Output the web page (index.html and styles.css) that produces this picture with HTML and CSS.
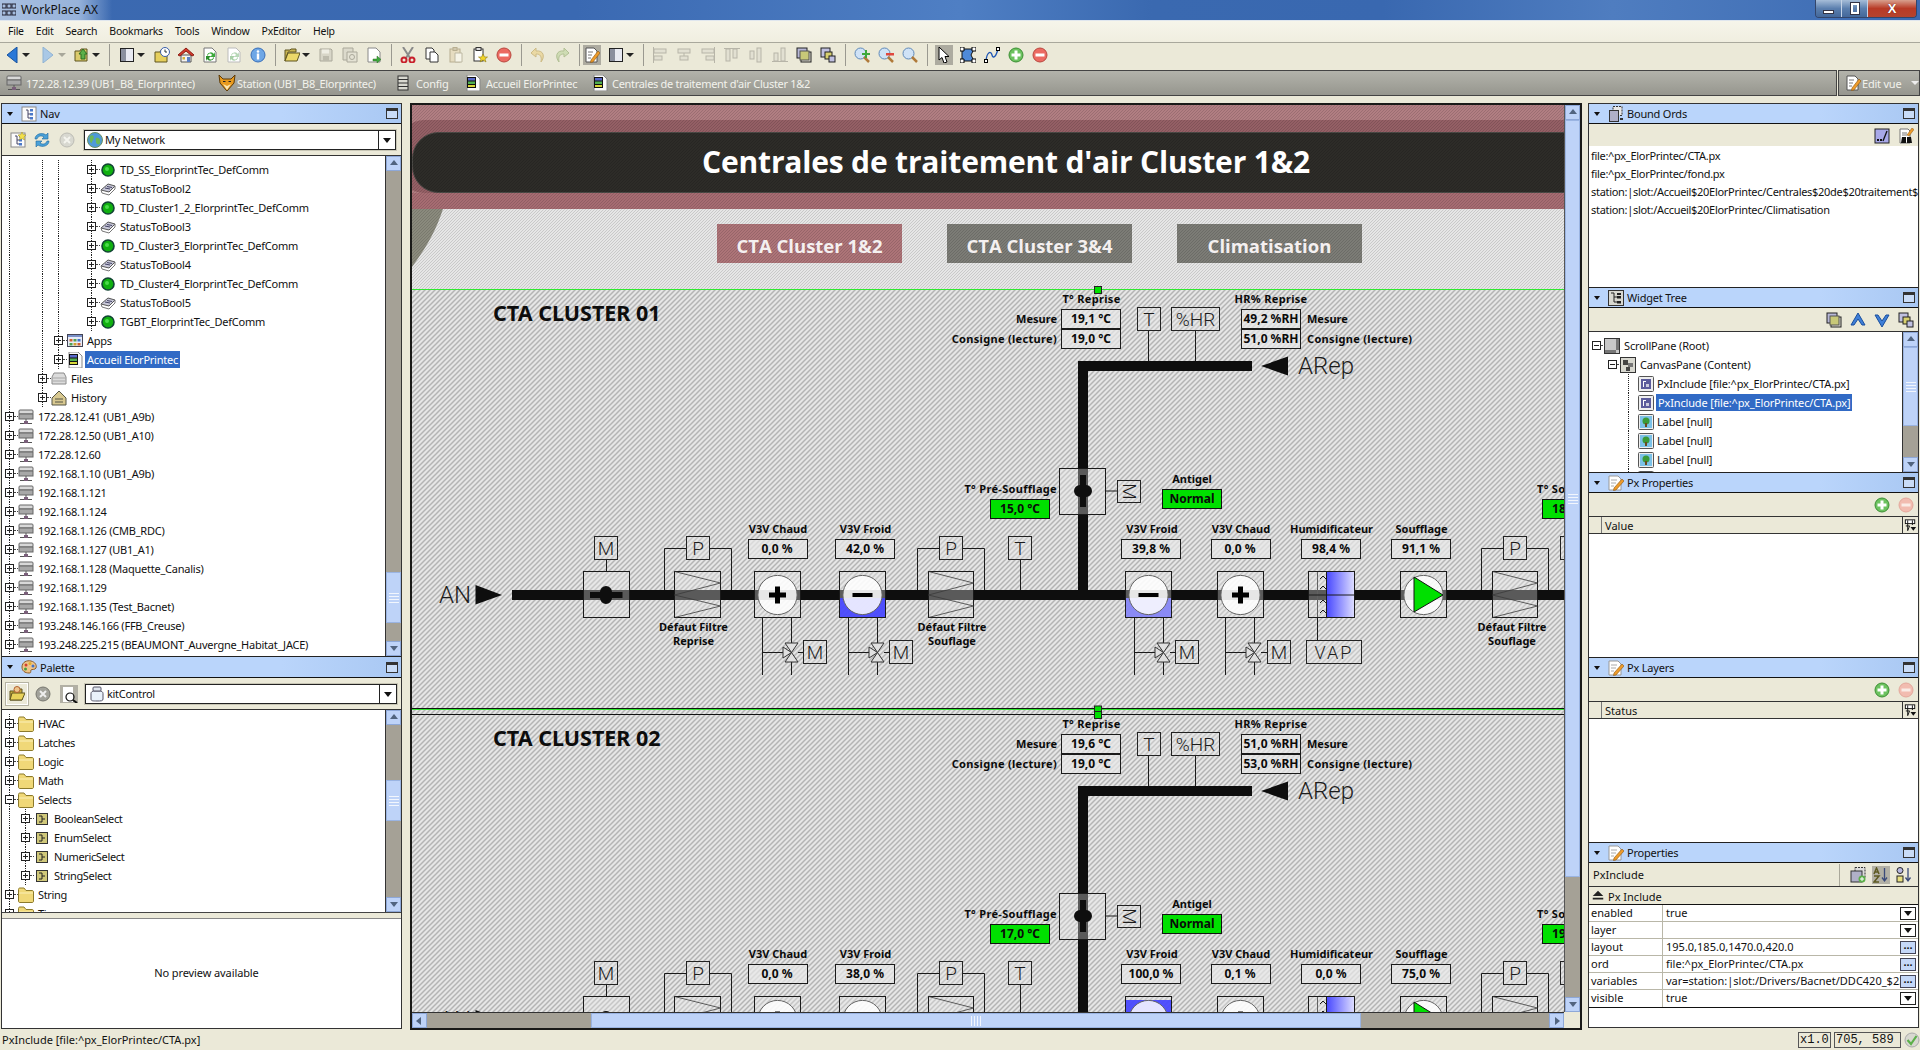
FILE: index.html
```html
<!DOCTYPE html>
<html lang="en">
<head>
<meta charset="utf-8">
<title>WorkPlace AX</title>
<link rel="stylesheet" href="styles.css">
</head>
<body>
<svg class="defs" width="0" height="0">
<defs>
<linearGradient id="gBlue" x1="0" y1="0" x2="1" y2="0"><stop offset="0" stop-color="#4a4aff"/><stop offset="1" stop-color="#dcdcff"/></linearGradient>
<pattern id="hl" width="5" height="5" patternUnits="userSpaceOnUse"><path d="M-1 1L1-1M0 5L5 0M4 6L6 4" stroke="#b4b4b4" stroke-width="1.5"/></pattern>
<pattern id="hu" width="3" height="3" patternUnits="userSpaceOnUse"><path d="M-1 1L1-1M0 3L3 0M2 4L4 2" stroke="#000" stroke-opacity=".14" stroke-width=".9"/></pattern>
<symbol id="i-back" viewBox="0 0 16 16"><path d="M13 0V16L3 8Z" fill="#2a78d8" stroke="#17539f"/></symbol>
<symbol id="i-fwd" viewBox="0 0 16 16"><path d="M3 0V16L13 8Z" fill="#a9c8e6" stroke="#8fb2d2"/></symbol>
<symbol id="i-folderup" viewBox="0 0 16 16"><path d="M1 4H6L7 2H13V14H1Z" fill="#dccb6c" stroke="#5e5520"/><path d="M7 12V7H5L9 2L13 7H11V12Z" fill="#5cb04a" stroke="#2c6d22"/></symbol>
<symbol id="i-panel" viewBox="0 0 16 16"><rect x="1.5" y="1.5" width="13" height="13" fill="#e8eaf2" stroke="#222"/><rect x="2" y="2" width="5" height="12" fill="#8a8f9e"/></symbol>
<symbol id="i-clockf" viewBox="0 0 16 16"><path d="M1 5H6L7 3H13V15H1Z" fill="#e6cf5c" stroke="#5e5520"/><circle cx="11" cy="5" r="4.5" fill="#fff" stroke="#3a5ea8"/><path d="M11 2.5V5H13" fill="none" stroke="#233"/></symbol>
<symbol id="i-home" viewBox="0 0 16 16"><path d="M3 8H13V15H3Z" fill="#f3f3f3" stroke="#555"/><path d="M0 8L8 1L16 8L14 9L8 4L2 9Z" fill="#d43a2c" stroke="#8b1f16"/><rect x="9" y="10" width="3" height="5" fill="#5a7fc4"/><rect x="4.500" y="10" width="2.500" height="2.500" fill="#d8b23a"/></symbol>
<symbol id="i-refp" viewBox="0 0 16 16"><path d="M2 1H10L14 5V15H2Z" fill="#fff" stroke="#777"/><path d="M5 8A4 4 0 0 1 12 7L13 5V10H8L10 8A2 2 0 0 0 6 9Z" fill="#3da93d"/><path d="M12 11A4 4 0 0 1 5 12L4 14V9H9L7 11A2 2 0 0 0 11 10Z" fill="#2c8f2c"/></symbol>
<symbol id="i-refpp" viewBox="0 0 16 16"><path d="M2 1H10L14 5V15H2Z" fill="#fff" stroke="#bbb"/><path d="M5 8A4 4 0 0 1 12 7L13 5V10H8L10 8A2 2 0 0 0 6 9Z" fill="#b8d8b8"/><path d="M12 11A4 4 0 0 1 5 12L4 14V9H9L7 11A2 2 0 0 0 11 10Z" fill="#a8cfa8"/></symbol>
<symbol id="i-info" viewBox="0 0 16 16"><circle cx="8" cy="8" r="7" fill="#6ea7e6" stroke="#3a6fb8"/><circle cx="8" cy="4.500" r="1.300" fill="#fff"/><rect x="6.800" y="6.500" width="2.400" height="6" fill="#fff"/></symbol>
<symbol id="i-open" viewBox="0 0 16 16"><path d="M1 3H6L7 2H12V5H4L1 14Z" fill="#c9b552" stroke="#5e5520"/><path d="M1 14L4 6H16L13 14Z" fill="#ecd86a" stroke="#5e5520"/></symbol>
<symbol id="i-save" viewBox="0 0 16 16"><path d="M2 2H13L14 3V14H2Z" fill="#d8d6c8" stroke="#aaa89a"/><rect x="4" y="2.500" width="7" height="4" fill="#efeee4"/><rect x="5" y="9" width="6" height="5" fill="#bdbbad"/></symbol>
<symbol id="i-saveall" viewBox="0 0 16 16"><path d="M1 1H11V13H1Z" fill="#dcdacc" stroke="#aaa89a"/><path d="M5 5H15V15H5Z" fill="#e4e2d4" stroke="#aaa89a"/><circle cx="10" cy="10" r="2.500" fill="none" stroke="#aaa89a"/></symbol>
<symbol id="i-pagea" viewBox="0 0 16 16"><path d="M2 1H10L14 5V15H2Z" fill="#fff" stroke="#888"/><path d="M7 12H11V9L15 12.500L11 16V14H7Z" fill="#3da93d" stroke="#2c6d22" stroke-width=".5"/></symbol>
<symbol id="i-cut" viewBox="0 0 16 16"><path d="M3 0L10 11M13 0L6 11" stroke="#8a8a8a" stroke-width="2"/><circle cx="4" cy="13" r="2.500" fill="none" stroke="#c8202c" stroke-width="2"/><circle cx="12" cy="13" r="2.500" fill="none" stroke="#c8202c" stroke-width="2"/></symbol>
<symbol id="i-copy" viewBox="0 0 16 16"><path d="M2 1H8L10 3V12H2Z" fill="#fff" stroke="#333"/><path d="M6 5H11L14 8V15H6Z" fill="#fff" stroke="#333"/></symbol>
<symbol id="i-paste" viewBox="0 0 16 16"><rect x="2" y="2" width="10" height="13" fill="#e6dcc0" stroke="#b8ae90"/><rect x="5" y="0.500" width="4" height="3" fill="#d0c8ae" stroke="#b8ae90"/><path d="M7 6H14V15H7Z" fill="#f6f4e8" stroke="#bdb8a2"/></symbol>
<symbol id="i-pastes" viewBox="0 0 16 16"><rect x="2" y="2" width="9" height="12" fill="#fff" stroke="#333"/><rect x="4" y="0.500" width="5" height="3" fill="#ddd" stroke="#333"/><path d="M11 7L12.500 10H15.500L13 12L14 15L11 13L8 15L9 12L6.500 10H9.500Z" fill="#f2d52a" stroke="#8d7a10" stroke-width=".6"/></symbol>
<symbol id="i-stop" viewBox="0 0 16 16"><circle cx="8" cy="8" r="7" fill="#ec6a62" stroke="#b9483f"/><rect x="3.500" y="6.500" width="9" height="3" fill="#fff"/></symbol>
<symbol id="i-add" viewBox="0 0 16 16"><circle cx="8" cy="8" r="7" fill="#6cc25f" stroke="#3c8f34"/><path d="M3.500 6.500H6.500V3.500H9.500V6.500H12.500V9.500H9.500V12.500H6.500V9.500H3.500Z" fill="#fff"/></symbol>
<symbol id="i-stopp" viewBox="0 0 16 16"><circle cx="8" cy="8" r="7" fill="#f2bcb0" stroke="#e4a89c"/><rect x="3.500" y="6.500" width="9" height="3" fill="#faece6"/></symbol>
<symbol id="i-undo" viewBox="0 0 16 16"><path d="M6 1L1 6L6 10V7C10 7 12 9 11 15C15 10 14 3 6 4Z" fill="#ead9a4" stroke="#cdbb86"/></symbol>
<symbol id="i-redo" viewBox="0 0 16 16"><path d="M10 1L15 6L10 10V7C6 7 4 9 5 15C1 10 2 3 10 4Z" fill="#cfdcb4" stroke="#b2c094"/></symbol>
<symbol id="i-edit" viewBox="0 0 16 16"><path d="M2 1H10L13 4V15H2Z" fill="#fff" stroke="#555"/><path d="M4 5H9M4 8H8M4 11H7" stroke="#777"/><path d="M7 13L14 4L16 6L9 15L6.500 15.500Z" fill="#ee9b2a" stroke="#8a5610" stroke-width=".6"/></symbol>
<symbol id="i-al1" viewBox="0 0 16 16"><path d="M1.500 0V16" stroke="#b7b5a8"/><rect x="2" y="2" width="12" height="4" fill="#e2e0d2" stroke="#b7b5a8"/><rect x="2" y="9" width="8" height="4" fill="#e2e0d2" stroke="#b7b5a8"/></symbol>
<symbol id="i-al2" viewBox="0 0 16 16"><rect x="2" y="2" width="12" height="4" fill="#e2e0d2" stroke="#b7b5a8"/><rect x="4" y="9" width="8" height="4" fill="#e2e0d2" stroke="#b7b5a8"/><path d="M8 6V9" stroke="#b7b5a8"/></symbol>
<symbol id="i-al3" viewBox="0 0 16 16"><path d="M14.500 0V16" stroke="#b7b5a8"/><rect x="2" y="2" width="12" height="4" fill="#e2e0d2" stroke="#b7b5a8"/><rect x="6" y="9" width="8" height="4" fill="#e2e0d2" stroke="#b7b5a8"/></symbol>
<symbol id="i-al4" viewBox="0 0 16 16"><path d="M0 1.500H16" stroke="#b7b5a8"/><rect x="2" y="2" width="4" height="12" fill="#e2e0d2" stroke="#b7b5a8"/><rect x="9" y="2" width="4" height="9" fill="#e2e0d2" stroke="#b7b5a8"/></symbol>
<symbol id="i-al5" viewBox="0 0 16 16"><rect x="2" y="4" width="4" height="8" fill="#e2e0d2" stroke="#b7b5a8"/><rect x="9" y="1" width="4" height="14" fill="#e2e0d2" stroke="#b7b5a8"/></symbol>
<symbol id="i-al6" viewBox="0 0 16 16"><path d="M0 14.500H16" stroke="#b7b5a8"/><rect x="2" y="6" width="4" height="8" fill="#e2e0d2" stroke="#b7b5a8"/><rect x="9" y="1" width="4" height="13" fill="#e2e0d2" stroke="#b7b5a8"/></symbol>
<symbol id="i-lay1" viewBox="0 0 16 16"><rect x="5" y="5" width="10" height="10" fill="#dedcd0" stroke="#222"/><rect x="1" y="1" width="10" height="10" fill="#b8b8d8" stroke="#222"/><rect x="4" y="4" width="9" height="9" fill="#c8c878" stroke="#555"/></symbol>
<symbol id="i-lay2" viewBox="0 0 16 16"><rect x="1" y="1" width="9" height="9" fill="#c0c0e0" stroke="#222"/><rect x="5" y="5" width="7" height="7" fill="#d8d070" stroke="#222"/><rect x="9" y="9" width="6" height="6" fill="#c0c0e0" stroke="#222"/></symbol>
<symbol id="i-zp" viewBox="0 0 16 16"><circle cx="6.500" cy="6.500" r="5.500" fill="#cfe2f6" stroke="#5f89b8"/><path d="M10 10L15 15" stroke="#b07a3a" stroke-width="2.500"/><path d="M8 6H11V3H13V6H16V8H13V11H11V8H8Z" fill="#3da93d"/></symbol>
<symbol id="i-zm" viewBox="0 0 16 16"><circle cx="6.500" cy="6.500" r="5.500" fill="#cfe2f6" stroke="#5f89b8"/><path d="M10 10L15 15" stroke="#b07a3a" stroke-width="2.500"/><rect x="8" y="6" width="8" height="2.500" fill="#e0483e"/></symbol>
<symbol id="i-z" viewBox="0 0 16 16"><circle cx="6.500" cy="6.500" r="5.500" fill="#cfe2f6" stroke="#5f89b8"/><path d="M10 10L15 15" stroke="#b07a3a" stroke-width="2.500"/></symbol>
<symbol id="i-cur" viewBox="0 0 16 16"><path d="M3 0V13L6 10.500L8 16L11 15L9 9.500H13Z" fill="#fff" stroke="#000"/></symbol>
<symbol id="i-shape" viewBox="0 0 16 16"><path d="M2 2H14L11 8L14 14H2Z" fill="#4f8ad8" stroke="#111"/><path d="M0 0H4V4H0ZM12 0H16V4H12ZM0 12H4V16H0ZM12 12H16V16H12Z" fill="#fff" stroke="#000"/></symbol>
<symbol id="i-curve" viewBox="0 0 16 16"><path d="M2 14C3 4 7 4 8 8S12 10 14 2" fill="none" stroke="#1e56b4" stroke-width="1.300"/><rect x="0.500" y="12.500" width="3" height="3" fill="#fff" stroke="#000"/><rect x="12.500" y="0.500" width="3" height="3" fill="#fff" stroke="#000"/></symbol>
<symbol id="i-host" viewBox="0 0 16 16"><rect x="1" y="1" width="14" height="4" rx="1" fill="#d8d8d8" stroke="#666"/><rect x="1" y="5" width="14" height="5" fill="#a8a8a8" stroke="#666"/><path d="M8 10V14M2 14.500H14" stroke="#555"/><rect x="6" y="12" width="4" height="3" fill="#7a5f7a"/></symbol>
<symbol id="i-fox" viewBox="0 0 18 16"><path d="M1 0L5 4H13L17 0L16 8L9 16L2 8Z" fill="#e89a1e" stroke="#5c3a08"/><path d="M5 9L9 15L13 9L9 11Z" fill="#fbe7b4"/><path d="M5 6.500H7.500M10.500 6.500H13" stroke="#222" stroke-width="1.200"/></symbol>
<symbol id="i-conf" viewBox="0 0 16 16"><rect x="3" y="1" width="10" height="14" fill="#d8d8d0" stroke="#333"/><path d="M3 4.500H13M3 8H13M3 11.500H13" stroke="#333"/></symbol>
<symbol id="i-stack" viewBox="0 0 16 16"><path d="M2 0H11L15 4V16H2Z" fill="#fafafa" stroke="#888"/><rect x="2" y="2" width="9" height="11" fill="#111"/><rect x="3" y="3" width="7" height="2.500" fill="#5868c8"/><rect x="3" y="6.500" width="7" height="2.500" fill="#50b050"/><rect x="3" y="10" width="7" height="2" fill="#d8d838"/></symbol>
<symbol id="i-navp" viewBox="0 0 16 16"><rect x="1" y="1" width="14" height="14" fill="#fbfbfb" stroke="#8a8a8a"/><path d="M5 4H7V12H10M7 8H10" fill="none" stroke="#446"/><rect x="9" y="3" width="3" height="2.500" fill="#4a78c8"/><rect x="9" y="7" width="3" height="2.500" fill="#4a78c8"/><rect x="9" y="11" width="3" height="2.500" fill="#4a78c8"/></symbol>
<symbol id="i-navn" viewBox="0 0 16 16"><use href="#i-navp"/><path d="M12 0L13.200 2.500L16 3L14 5L14.500 8L12 6.500L9.500 8L10 5L8 3L10.800 2.500Z" fill="#f2e04a" stroke="#9a8a20" stroke-width=".5"/></symbol>
<symbol id="i-sync" viewBox="0 0 16 16"><path d="M1 7C1 2 8 0 12 3L14 1V7H8L10 5C7 3 4 4 3 7Z" fill="#4aa0d8" stroke="#1e6a9e" stroke-width=".6"/><path d="M15 9C15 14 8 16 4 13L2 15V9H8L6 11C9 13 12 12 13 9Z" fill="#4aa0d8" stroke="#1e6a9e" stroke-width=".6"/></symbol>
<symbol id="i-xg" viewBox="0 0 16 16"><circle cx="8" cy="8" r="7" fill="#d8d8d0" stroke="#bcbcb4"/><path d="M5 5L11 11M11 5L5 11" stroke="#f4f4ee" stroke-width="2"/></symbol>
<symbol id="i-xd" viewBox="0 0 16 16"><circle cx="8" cy="8" r="7" fill="#a2a29a" stroke="#77776f"/><path d="M5 5L11 11M11 5L5 11" stroke="#eee" stroke-width="2"/></symbol>
<symbol id="i-globe" viewBox="0 0 16 16"><circle cx="8" cy="8" r="7.500" fill="#4e9ad8" stroke="#6b8f60"/><path d="M3 4C6 2 8 5 6 8S5 12 4 11 2 6 3 4ZM9 6C12 5 14 8 13 11S9 12 9 10 8 7 9 6Z" fill="#6cb85a"/></symbol>
<symbol id="i-pal" viewBox="0 0 16 16"><path d="M1 8C1 3 6 1 10 2S16 6 15 9C14 11 11 10 10 11S11 14 8 14C4 14 1 12 1 8Z" fill="#eec48a" stroke="#8c5c28"/><circle cx="5" cy="6" r="1.500" fill="#d04030"/><circle cx="9" cy="4.500" r="1.500" fill="#e0b030"/><circle cx="4.500" cy="10" r="1.500" fill="#4aa040"/><circle cx="12" cy="7" r="1.500" fill="#4070c8"/></symbol>
<symbol id="i-palo" viewBox="0 0 16 16"><path d="M1 5H6L7 3H13V14H1Z" fill="#c8ac3c" stroke="#5e5520"/><path d="M1 14L3 7H16L13 14Z" fill="#e8d25a" stroke="#5e5520"/><circle cx="8" cy="3.500" r="3" fill="#eec48a" stroke="#b06030"/></symbol>
<symbol id="i-find" viewBox="0 0 16 16"><path d="M1 0H11V15H1Z" fill="#fff"/><circle cx="8" cy="10" r="4" fill="none" stroke="#111" stroke-width="1.200"/><path d="M11 13L15 16" stroke="#111" stroke-width="2"/></symbol>
<symbol id="i-jar" viewBox="0 0 16 16"><path d="M4 5C2 6 2 7 2 8V13C2 15 4 15 8 15S14 15 14 13V8C14 7 14 6 12 5Z" fill="#eaf2fb" stroke="#556"/><rect x="4" y="1" width="8" height="4" rx="1" fill="#dfe5ee" stroke="#556"/></symbol>
<symbol id="i-folder" viewBox="0 0 16 16"><path d="M.5 2.500C.5 1.500 1 1 2 1H6L8 3.500H14C15 3.500 15.500 4 15.500 5V14C15.500 15 15 15.500 14 15.500H2C1 15.500 .5 15 .5 14Z" fill="#f0d878" stroke="#8c7a2c"/><path d="M1 6H15" stroke="#fbf0b8"/></symbol>
<symbol id="i-sel" viewBox="0 0 16 16"><rect x="2.500" y="2.500" width="11" height="11" fill="#d0c87a" stroke="#333"/><path d="M5 5H8V11H5M8 8H11" fill="none" stroke="#222"/></symbol>
<symbol id="i-green" viewBox="0 0 16 16"><circle cx="8" cy="8" r="6" fill="#10b010" stroke="#143" stroke-width="1.600"/><circle cx="7" cy="7" r="2" fill="#4cdc4c"/></symbol>
<symbol id="i-tag" viewBox="0 0 16 16"><path d="M1 9L8 3L15 5L9 11Z" fill="#c8c8d8" stroke="#555"/><path d="M5 7L10 8M7 5.500L12 6.500" stroke="#446"/><path d="M1 9L2 12L9 14L15 8L15 5" fill="none" stroke="#777"/></symbol>
<symbol id="i-apps" viewBox="0 0 16 16"><rect x="0.500" y="1.500" width="15" height="12" fill="#e8ecf8" stroke="#445"/><rect x="1" y="2" width="14" height="2" fill="#7a90c8"/><rect x="2.500" y="6" width="3" height="2.500" fill="#d06030"/><rect x="6.500" y="6" width="3" height="2.500" fill="#50a050"/><rect x="10.500" y="6" width="3" height="2.500" fill="#4070c8"/><rect x="2.500" y="10" width="3" height="2.500" fill="#50a050"/><rect x="6.500" y="10" width="3" height="2.500" fill="#d0a030"/><rect x="10.500" y="10" width="3" height="2.500" fill="#d06030"/></symbol>
<symbol id="i-files" viewBox="0 0 16 16"><path d="M1 13V6L3 2H13L15 6V13Z" fill="#dcdcdc" stroke="#8a8a8a"/><path d="M1 7H15M2 10H14" stroke="#a8a8a8"/></symbol>
<symbol id="i-hist" viewBox="0 0 16 16"><path d="M1 8L8 1L15 8V15H1Z" fill="#d8c890" stroke="#554"/><path d="M4 9H12M4 12H12" stroke="#554"/></symbol>
<symbol id="i-bound" viewBox="0 0 16 16"><rect x="5" y="0.500" width="9" height="9" fill="#e8e8e8" stroke="#333" stroke-dasharray="2 1"/><rect x="1.500" y="4.500" width="9" height="11" fill="#b0b0c8" stroke="#333"/><rect x="12" y="12" width="3" height="2" fill="#333"/></symbol>
<symbol id="i-dots" viewBox="0 0 16 16"><rect x="1" y="1" width="14" height="14" fill="#a8a8e8" stroke="#222"/><rect x="3" y="11" width="2" height="2" fill="#111"/><rect x="6" y="11" width="2" height="2" fill="#111"/><path d="M9 13L13 3" stroke="#111" stroke-width="1.300"/></symbol>
<symbol id="i-edf" viewBox="0 0 16 16"><path d="M2 1H10L12 3V15H2Z" fill="#fff" stroke="#777"/><path d="M4 5H9M4 7H9" stroke="#777"/><path d="M9 7L14 0L16 1.500L11 8Z" fill="#ee9b2a" stroke="#8a5610" stroke-width=".5"/><path d="M4 9H8V15H3ZM9 9H13L14 15H9Z" fill="#111"/></symbol>
<symbol id="i-tree" viewBox="0 0 16 16"><rect x="0.500" y="0.500" width="15" height="15" fill="#d8d8d0" stroke="#333"/><path d="M3 3H6V12H9M6 7H9" fill="none" stroke="#222"/><rect x="9" y="3" width="4" height="2" fill="#222"/><rect x="9" y="6" width="4" height="2.500" fill="#222"/><rect x="9" y="11" width="4" height="2.500" fill="#222"/></symbol>
<symbol id="i-up" viewBox="0 0 16 16"><path d="M8 1L15 13H12L8 7L4 13H1Z" fill="#3f7fd8" stroke="#1a4f9c"/></symbol>
<symbol id="i-dn" viewBox="0 0 16 16"><path d="M8 15L15 3H12L8 9L4 3H1Z" fill="#3f7fd8" stroke="#1a4f9c"/></symbol>
<symbol id="i-props" viewBox="0 0 16 16"><path d="M1 1H10L13 4V15H1Z" fill="#fff" stroke="#999"/><path d="M3 5H9M3 8H8M3 11H6" stroke="#aaa"/><path d="M6 13L14 4L16 6L8 15L5.500 15.500Z" fill="#ee9b2a" stroke="#8a5610" stroke-width=".6"/></symbol>
<symbol id="i-px" viewBox="0 0 16 16"><rect x="0.500" y="0.500" width="15" height="15" rx="1" fill="#eee" stroke="#555"/><rect x="3" y="3" width="10" height="10" fill="#5c5c9c"/><rect x="5" y="5" width="3" height="1" fill="#fff"/><rect x="5" y="5" width="1" height="6" fill="#fff"/><rect x="8" y="8" width="3" height="3" fill="#ccd"/></symbol>
<symbol id="i-lab" viewBox="0 0 16 16"><rect x="0.500" y="0.500" width="15" height="15" rx="1" fill="#eee" stroke="#555"/><rect x="2" y="2" width="12" height="12" fill="#7cc2e8"/><circle cx="8" cy="7" r="3.500" fill="#3a9a3a"/><rect x="7" y="9" width="2" height="4" fill="#6a4a20"/></symbol>
<symbol id="i-scr" viewBox="0 0 16 16"><rect x="0.500" y="0.500" width="15" height="15" fill="#c8c8c8" stroke="#333"/><rect x="12" y="1" width="3" height="11" fill="#777"/><rect x="1" y="12" width="11" height="3" fill="#777"/></symbol>
<symbol id="i-can" viewBox="0 0 16 16"><rect x="0.500" y="0.500" width="15" height="15" fill="#d8d8d0" stroke="#333"/><rect x="3" y="3" width="5" height="5" fill="#444"/><rect x="8" y="6" width="5" height="4" fill="#777"/><rect x="6" y="10" width="4" height="4" fill="#444"/></symbol>
<symbol id="i-addc" viewBox="0 0 16 16"><rect x="5" y="0.500" width="10" height="10" fill="#ddd" stroke="#333" stroke-dasharray="2 1"/><rect x="1" y="4" width="11" height="11" fill="#b0b0c8" stroke="#333"/><circle cx="12" cy="12" r="3.500" fill="#5cb04a"/><path d="M10 12H14M12 10V14" stroke="#fff"/></symbol>
<symbol id="i-az" viewBox="0 0 16 16"><path d="M11.500 1V13M9 10.500L11.500 14L14 10.500" fill="none" stroke="#3a4a7a" stroke-width="1.300"/><path d="M1 7L3.500 1L6 7M2 5H5M1 9H6L1 15H6" fill="none" stroke="#5e5a22" stroke-width="1.500"/></symbol>
<symbol id="i-sort" viewBox="0 0 16 16"><circle cx="4" cy="3.500" r="3" fill="#b8b8e0" stroke="#222"/><rect x="1" y="9" width="6" height="6" fill="#e8e080" stroke="#222"/><path d="M12 1V13M9.500 10.500L12 14L14.500 10.500" fill="none" stroke="#3a4a7a" stroke-width="1.300"/></symbol>
<symbol id="i-tabo" viewBox="0 0 16 16"><rect x="2.500" y="2.500" width="10" height="4" fill="#fff" stroke="#111"/><path d="M5 3V14M10 3V8M3 9H7L5 14" fill="none" stroke="#111"/><path d="M8 10H14L11 14Z" fill="#111"/></symbol>
<symbol id="i-chk" viewBox="0 0 16 16"><circle cx="8" cy="8" r="7" fill="#d8d8d0" stroke="#aaa"/><path d="M3.500 8L7 12L12.500 4" fill="none" stroke="#5cb04a" stroke-width="2.200"/></symbol>
<symbol id="i-col" viewBox="0 0 16 16"><path d="M8 2L14 8H2ZM2 10H14V12H2Z" fill="#222"/></symbol>
<symbol id="i-wa" viewBox="0 0 14 14"><rect x="0" y="1" width="4" height="4" fill="none" stroke="#223"/><rect x="5" y="1" width="4" height="4" fill="none" stroke="#223"/><rect x="10" y="1" width="4" height="4" fill="none" stroke="#223"/><rect x="0" y="8" width="4" height="4" fill="none" stroke="#223"/><rect x="5" y="8" width="4" height="4" fill="none" stroke="#223"/><rect x="10" y="8" width="4" height="4" fill="none" stroke="#223"/></symbol>
</defs>
</svg>

<header class="titlebar">
  <div class="glow"><svg class="ic wa"><use href="#i-wa"/></svg><span>WorkPlace AX</span></div>
  <div class="winctl"><span class="wc wc-min"><i></i></span><span class="wc wc-max"><i></i></span><span class="wc wc-close">X</span></div>
</header>

<nav class="menubar"><span>File</span><span>Edit</span><span>Search</span><span>Bookmarks</span><span>Tools</span><span>Window</span><span>PxEditor</span><span>Help</span></nav>

<div class="toolbar">
  <a class="b"><svg class="ic"><use href="#i-back"/></svg></a><i class="d"></i><i class="s2"></i>
  <a class="b"><svg class="ic"><use href="#i-fwd"/></svg></a><i class="d pale"></i>
  <a class="b"><svg class="ic"><use href="#i-folderup"/></svg></a><i class="d"></i><i class="sep"></i><i class="s1"></i>
  <a class="b"><svg class="ic"><use href="#i-panel"/></svg></a><i class="d"></i><i class="s1"></i>
  <a class="b"><svg class="ic"><use href="#i-clockf"/></svg></a>
  <a class="b"><svg class="ic"><use href="#i-home"/></svg></a>
  <a class="b"><svg class="ic"><use href="#i-refp"/></svg></a>
  <a class="b"><svg class="ic"><use href="#i-refpp"/></svg></a>
  <a class="b"><svg class="ic"><use href="#i-info"/></svg></a><i class="sep"></i>
  <a class="b"><svg class="ic"><use href="#i-open"/></svg></a><i class="d"></i>
  <a class="b"><svg class="ic"><use href="#i-save"/></svg></a>
  <a class="b"><svg class="ic"><use href="#i-saveall"/></svg></a>
  <a class="b"><svg class="ic"><use href="#i-pagea"/></svg></a><i class="sep"></i>
  <a class="b"><svg class="ic"><use href="#i-cut"/></svg></a>
  <a class="b"><svg class="ic"><use href="#i-copy"/></svg></a>
  <a class="b"><svg class="ic"><use href="#i-paste"/></svg></a>
  <a class="b"><svg class="ic"><use href="#i-pastes"/></svg></a>
  <a class="b"><svg class="ic"><use href="#i-stop"/></svg></a><i class="sep"></i>
  <a class="b"><svg class="ic"><use href="#i-undo"/></svg></a>
  <a class="b"><svg class="ic"><use href="#i-redo"/></svg></a><i class="sep n"></i>
  <a class="b on"><svg class="ic"><use href="#i-edit"/></svg></a>
  <a class="b"><svg class="ic"><use href="#i-panel"/></svg></a><i class="d"></i><i class="sep"></i>
  <a class="b"><svg class="ic"><use href="#i-al1"/></svg></a>
  <a class="b"><svg class="ic"><use href="#i-al2"/></svg></a>
  <a class="b"><svg class="ic"><use href="#i-al3"/></svg></a>
  <a class="b"><svg class="ic"><use href="#i-al4"/></svg></a>
  <a class="b"><svg class="ic"><use href="#i-al5"/></svg></a>
  <a class="b"><svg class="ic"><use href="#i-al6"/></svg></a>
  <a class="b"><svg class="ic"><use href="#i-lay1"/></svg></a>
  <a class="b"><svg class="ic"><use href="#i-lay2"/></svg></a><i class="sep"></i>
  <a class="b"><svg class="ic"><use href="#i-zp"/></svg></a>
  <a class="b"><svg class="ic"><use href="#i-zm"/></svg></a>
  <a class="b"><svg class="ic"><use href="#i-z"/></svg></a><i class="sep"></i>
  <a class="b on"><svg class="ic"><use href="#i-cur"/></svg></a>
  <a class="b"><svg class="ic"><use href="#i-shape"/></svg></a>
  <a class="b"><svg class="ic"><use href="#i-curve"/></svg></a>
  <a class="b"><svg class="ic"><use href="#i-add"/></svg></a>
  <a class="b"><svg class="ic"><use href="#i-stop"/></svg></a>
</div>

<div class="tabbar">
  <div class="tabs">
    <span class="tab t1"><svg class="ic"><use href="#i-host"/></svg>172.28.12.39 (UB1_B8_Elorprintec)</span>
    <span class="tab t2"><svg class="ic fox"><use href="#i-fox"/></svg>Station (UB1_B8_Elorprintec)</span>
    <span class="tab t3"><svg class="ic"><use href="#i-conf"/></svg>Config</span>
    <span class="tab t4"><svg class="ic"><use href="#i-stack"/></svg>Accueil ElorPrintec</span>
    <span class="tab t5"><svg class="ic"><use href="#i-stack"/></svg>Centrales de traitement d'air Cluster 1&amp;2</span>
  </div>
  <div class="editvue"><svg class="ic"><use href="#i-edit"/></svg>Edit vue<i class="d lite"></i></div>
</div>

<main class="main">
  <section class="col left">
    <div class="pane nav-pane">
      <div class="phead"><i class="tri"></i><svg class="ic"><use href="#i-navp"/></svg><span>Nav</span><i class="rest"></i></div>
      <div class="ptool t32">
        <svg class="ic m1"><use href="#i-navn"/></svg><svg class="ic m2"><use href="#i-sync"/></svg><svg class="ic m3"><use href="#i-xg"/></svg>
        <div class="combo"><svg class="ic"><use href="#i-globe"/></svg><span>My Network</span><i class="cbtn"></i></div>
      </div>
      <div class="treewrap">
        <div class="tree navtree">
          <div class="row d3 l3"><b class="plus"></b><svg class="ic"><use href="#i-green"/></svg><span>TD_SS_ElorprintTec_DefComm</span></div>
          <div class="row d3 l3"><b class="plus"></b><svg class="ic"><use href="#i-tag"/></svg><span>StatusToBool2</span></div>
          <div class="row d3 l3"><b class="plus"></b><svg class="ic"><use href="#i-green"/></svg><span>TD_Cluster1_2_ElorprintTec_DefComm</span></div>
          <div class="row d3 l3"><b class="plus"></b><svg class="ic"><use href="#i-tag"/></svg><span>StatusToBool3</span></div>
          <div class="row d3 l3"><b class="plus"></b><svg class="ic"><use href="#i-green"/></svg><span>TD_Cluster3_ElorprintTec_DefComm</span></div>
          <div class="row d3 l3"><b class="plus"></b><svg class="ic"><use href="#i-tag"/></svg><span>StatusToBool4</span></div>
          <div class="row d3 l3"><b class="plus"></b><svg class="ic"><use href="#i-green"/></svg><span>TD_Cluster4_ElorprintTec_DefComm</span></div>
          <div class="row d3 l3"><b class="plus"></b><svg class="ic"><use href="#i-tag"/></svg><span>StatusToBool5</span></div>
          <div class="row d3 l3"><b class="plus"></b><svg class="ic"><use href="#i-green"/></svg><span>TGBT_ElorprintTec_DefComm</span></div>
          <div class="row d2 l2"><b class="plus"></b><svg class="ic"><use href="#i-apps"/></svg><span>Apps</span></div>
          <div class="row d2 l2"><b class="plus"></b><svg class="ic"><use href="#i-stack"/></svg><span class="sel">Accueil ElorPrintec</span></div>
          <div class="row d1 l1"><b class="plus"></b><svg class="ic"><use href="#i-files"/></svg><span>Files</span></div>
          <div class="row d1 l1"><b class="plus"></b><svg class="ic"><use href="#i-hist"/></svg><span>History</span></div>
          <div class="row d0 l0"><b class="plus"></b><svg class="ic"><use href="#i-host"/></svg><span>172.28.12.41 (UB1_A9b)</span></div>
          <div class="row d0 l0"><b class="plus"></b><svg class="ic"><use href="#i-host"/></svg><span>172.28.12.50 (UB1_A10)</span></div>
          <div class="row d0 l0"><b class="plus"></b><svg class="ic"><use href="#i-host"/></svg><span>172.28.12.60</span></div>
          <div class="row d0 l0"><b class="plus"></b><svg class="ic"><use href="#i-host"/></svg><span>192.168.1.10 (UB1_A9b)</span></div>
          <div class="row d0 l0"><b class="plus"></b><svg class="ic"><use href="#i-host"/></svg><span>192.168.1.121</span></div>
          <div class="row d0 l0"><b class="plus"></b><svg class="ic"><use href="#i-host"/></svg><span>192.168.1.124</span></div>
          <div class="row d0 l0"><b class="plus"></b><svg class="ic"><use href="#i-host"/></svg><span>192.168.1.126 (CMB_RDC)</span></div>
          <div class="row d0 l0"><b class="plus"></b><svg class="ic"><use href="#i-host"/></svg><span>192.168.1.127 (UB1_A1)</span></div>
          <div class="row d0 l0"><b class="plus"></b><svg class="ic"><use href="#i-host"/></svg><span>192.168.1.128 (Maquette_Canalis)</span></div>
          <div class="row d0 l0"><b class="plus"></b><svg class="ic"><use href="#i-host"/></svg><span>192.168.1.129</span></div>
          <div class="row d0 l0"><b class="plus"></b><svg class="ic"><use href="#i-host"/></svg><span>192.168.1.135 (Test_Bacnet)</span></div>
          <div class="row d0 l0"><b class="plus"></b><svg class="ic"><use href="#i-host"/></svg><span>193.248.146.166 (FFB_Creuse)</span></div>
          <div class="row d0 l0"><b class="plus"></b><svg class="ic"><use href="#i-host"/></svg><span>193.248.225.215 (BEAUMONT_Auvergne_Habitat_JACE)</span></div>
        </div>
        <div class="vs"><i class="up"></i><i class="tr nav-a"></i><i class="thumb nav-t"></i><i class="tr grow"></i><i class="dn"></i></div>
      </div>
    </div>
    <div class="pane pal-pane">
      <div class="phead"><i class="tri"></i><svg class="ic"><use href="#i-pal"/></svg><span>Palette</span><i class="rest"></i></div>
      <div class="ptool t32">
        <span class="tbtn"><svg class="ic"><use href="#i-palo"/></svg></span><svg class="ic m3b"><use href="#i-xd"/></svg><span class="fbtn"><svg class="ic"><use href="#i-find"/></svg></span>
        <div class="combo c2"><svg class="ic"><use href="#i-jar"/></svg><span>kitControl</span><i class="cbtn"></i></div>
      </div>
      <div class="treewrap">
        <div class="tree paltree">
          <div class="row d0 l0"><b class="plus"></b><svg class="ic"><use href="#i-folder"/></svg><span>HVAC</span></div>
          <div class="row d0 l0"><b class="plus"></b><svg class="ic"><use href="#i-folder"/></svg><span>Latches</span></div>
          <div class="row d0 l0"><b class="plus"></b><svg class="ic"><use href="#i-folder"/></svg><span>Logic</span></div>
          <div class="row d0 l0"><b class="plus"></b><svg class="ic"><use href="#i-folder"/></svg><span>Math</span></div>
          <div class="row d0 l0"><b class="minus"></b><svg class="ic"><use href="#i-folder"/></svg><span>Selects</span></div>
          <div class="row dp lp"><b class="plus"></b><svg class="ic"><use href="#i-sel"/></svg><span>BooleanSelect</span></div>
          <div class="row dp lp"><b class="plus"></b><svg class="ic"><use href="#i-sel"/></svg><span>EnumSelect</span></div>
          <div class="row dp lp"><b class="plus"></b><svg class="ic"><use href="#i-sel"/></svg><span>NumericSelect</span></div>
          <div class="row dp lp"><b class="plus"></b><svg class="ic"><use href="#i-sel"/></svg><span>StringSelect</span></div>
          <div class="row d0 l0"><b class="plus"></b><svg class="ic"><use href="#i-folder"/></svg><span>String</span></div>
          <div class="row d0 l0"><b class="plus"></b><svg class="ic"><use href="#i-folder"/></svg><span>Timer</span></div>
        </div>
        <div class="vs"><i class="up"></i><i class="tr pal-a"></i><i class="thumb pal-t"></i><i class="tr grow"></i><i class="dn"></i></div>
      </div>
      <div class="splitter"></div>
      <div class="preview">No preview available</div>
    </div>
  </section>

  <section class="center">
    <div class="canvas">
      <svg class="diagram" width="1152" height="907" viewBox="412 105 1152 907">
        <defs>
          <g id="cta">
            <g class="duct">
              <rect x="512" y="590" width="1060" height="10"/>
              <rect x="1078" y="361" width="10" height="232"/>
              <rect x="1078" y="361" width="174" height="10"/>
              <path d="M502 595L475.500 585V604.500Z"/>
              <path d="M1261 366L1288 356.500V375.500Z"/>
            </g>
            <path class="ln" d="M606.500 560V571M664.500 590V548.500H686.500M709.500 548.500H731.500V590M917.500 590V548.500H939.500M962.500 548.500H984.500V590M1020.500 560V590M1148.500 331V361M1195.500 331V361M1481.500 590V548.500H1503.500M1526.500 548.500H1548.500V590M1105.500 491H1117.500"/>
            <path class="ln" d="M762.500 617V675M791.500 617V675M762.500 652.500H783M798 652.500H803.500M848.500 617V675M877.500 617V675M848.500 652.500H869M884 652.500H889.500M1134.500 617V675M1163.500 617V675M1134.500 652.500H1155M1170 652.500H1175.500M1225.500 617V675M1254.500 617V675M1225.500 652.500H1246M1261 652.500H1267.500M1317.500 571V640"/>
            <g class="bx">
              <rect x="583.500" y="571.500" width="46" height="46"/>
              <rect x="674.500" y="571.500" width="46" height="46"/>
              <rect x="928.500" y="571.500" width="45" height="46"/>
              <rect x="1492.500" y="571.500" width="45" height="46"/>
              <rect x="754.500" y="571.500" width="46" height="46"/>
              <rect x="839.500" y="571.500" width="46" height="46"/>
              <rect x="1125.500" y="571.500" width="46" height="46"/>
              <rect x="1217.500" y="571.500" width="46" height="46"/>
              <rect x="1400.500" y="571.500" width="46" height="46"/>
              <rect x="1059.500" y="468.500" width="46" height="46"/>
              <rect x="1308.500" y="571.500" width="46" height="46"/>
            </g>
            <rect class="hum" x="1327" y="572" width="27" height="45"/>
            <path class="ln" d="M1308.500 595H1354.500M1326.500 572V617M1320 579L1323 576L1326 579M1320 589L1323 586L1326 589M1320 603L1323 600L1326 603M1320 613L1323 610L1326 613"/>
            <path class="zz" d="M674.500 571.500L720.500 583L674.500 595L720.500 606L674.500 617.500M928.500 571.500L973.500 583L928.500 595L973.500 606L928.500 617.500M1492.500 571.500L1537.500 583L1492.500 595L1537.500 606L1492.500 617.500"/>
            <path class="duct" d="M590 592H600A6 6 0 0 1 612 592H622.500V598H612A6 6 0 0 1 600 598H590Z"/>
            <path class="duct" d="M1080 475H1086V485A6 6 0 0 1 1086 497V507H1080V497A6 6 0 0 1 1080 485Z"/>
            <g class="vlv">
              <path d="M785 643H798L791.500 652.500L785 662H798L791.500 652.500ZM783 647V658L791.500 652.500Z"/>
              <path d="M871 643H884L877.500 652.500L871 662H884L877.500 652.500ZM869 647V658L877.500 652.500Z"/>
              <path d="M1157 643H1170L1163.500 652.500L1157 662H1170L1163.500 652.500ZM1155 647V658L1163.500 652.500Z"/>
              <path d="M1248 643H1261L1254.500 652.500L1248 662H1261L1254.500 652.500ZM1246 647V658L1254.500 652.500Z"/>
            </g>
            <g class="lbox">
              <rect x="594.500" y="536.500" width="23" height="23"/>
              <rect x="686.500" y="536.500" width="23" height="23"/>
              <rect x="939.500" y="536.500" width="23" height="23"/>
              <rect x="1008.500" y="536.500" width="23" height="23"/>
              <rect x="1503.500" y="536.500" width="23" height="23"/>
              <rect x="1560.500" y="536.500" width="23" height="23"/>
              <rect x="1137.500" y="307.500" width="23" height="23"/>
              <rect x="1171.500" y="307.500" width="48" height="23"/>
              <rect x="803.500" y="640.500" width="23" height="23"/>
              <rect x="889.500" y="640.500" width="23" height="23"/>
              <rect x="1175.500" y="640.500" width="23" height="23"/>
              <rect x="1267.500" y="640.500" width="23" height="23"/>
              <rect x="1306.500" y="640.500" width="55" height="23"/>
              <rect x="1117.500" y="480.500" width="23" height="22"/>
            </g>
            <g class="thin">
              <text x="606" y="555">M</text><text x="698" y="555">P</text><text x="951" y="555">P</text><text x="1020" y="555">T</text><text x="1515" y="555">P</text>
              <text x="1149" y="326">T</text><text x="1195.500" y="326">%HR</text>
              <text x="815" y="659">M</text><text x="901" y="659">M</text><text x="1187" y="659">M</text><text x="1279" y="659">M</text>
              <text class="vap" x="1334" y="659">VAP</text>
              <text class="big" x="455" y="603">AN</text><text class="big" x="1326" y="374">ARep</text>
              <text transform="translate(1122.500 491.500) rotate(90)">M</text>
            </g>
            <rect class="grn" x="1094.500" y="286.500" width="7" height="7"/>
          </g>
          <g id="coilw"><circle class="wc" r="19.600"/></g>
          <path id="sp" d="M-8.500-2.500H-2.500V-8.500H2.500V-2.500H8.500V2.500H2.500V8.500H-2.500V2.500H-8.500Z"/>
          <rect id="sm" x="-10" y="-2" width="20" height="4"/>
        </defs>

        <rect class="bg-low" x="412" y="105" width="1152" height="907"/>
        <rect class="hatchl" x="412" y="289" width="1152" height="723"/>
        <rect class="top1" x="412" y="105" width="1152" height="104"/>
        <rect class="top2" x="400" y="120" width="1200" height="73" rx="24"/>
        <rect class="top3" x="412" y="193" width="1152" height="16"/>
        <rect class="pill" x="412.500" y="132.500" width="1300" height="60" rx="26"/>
        <rect class="light" x="412" y="209" width="1152" height="80"/>
        <path class="curve" d="M443 209C434 236 424 250 412 267V209Z"/>
        <rect class="nb nb1" x="717" y="224" width="185" height="39"/>
        <rect class="nb nb2" x="947" y="224" width="185" height="39"/>
        <rect class="nb nb2" x="1177" y="224" width="185" height="39"/>
        <rect class="hatchu" x="412" y="105" width="1152" height="184"/>
        <text class="ttl" x="1006" y="173">Centrales de traitement d'air Cluster 1&amp;2</text>
        <text class="nbt" x="809.500" y="253">CTA Cluster 1&amp;2</text>
        <text class="nbt" x="1039.500" y="253">CTA Cluster 3&amp;4</text>
        <text class="nbt" x="1269.500" y="253">Climatisation</text>
        <path class="gline" d="M412 289.500H1564"/>
        <path class="bline" d="M412 708.500H1564M412 714.500H1564"/>
        <path class="gline" d="M412 709.500H1564"/>
        <rect class="grn" x="1094.500" y="706" width="7" height="7"/>

        <use href="#cta"/>
        <use href="#cta" y="425"/>

        <!-- CTA 01 -->
        <g>
          <path class="bluef" d="M840 598H885V617H840Z"/>
          <path class="bluel" d="M1126 598H1171V617H1126Z"/>
          <use href="#coilw" x="777.500" y="595"/><use href="#coilw" x="862.500" y="595"/><use href="#coilw" x="1148.500" y="595"/><use href="#coilw" x="1240.500" y="595"/><use href="#coilw" x="1423.500" y="595"/>
          <use href="#sp" x="777.500" y="595"/><use href="#sm" x="862.500" y="595"/><use href="#sm" x="1148.500" y="595"/><use href="#sp" x="1240.500" y="595"/>
          <path class="fan" d="M1414 577L1443 595L1414 612Z"/>
          <text class="ctat" x="493" y="321">CTA CLUSTER 01</text>
          <g class="lb">
            <text class="c w" x="1091.500" y="302.500">T° Reprise</text><text class="c w" x="1271" y="302.500">HR% Reprise</text>
            <text class="r" x="1057" y="322.500">Mesure</text><text class="r w" x="1057" y="342.500">Consigne (lecture)</text>
            <text x="1307" y="322.500">Mesure</text><text class="w" x="1307" y="342.500">Consigne (lecture)</text>
            <text class="r w" x="1057" y="492.500">T° Pré-Soufflage</text><text class="w" x="1537" y="492.500">T° Soufflage</text>
            <text class="c" x="1192" y="482.500">Antigel</text>
            <text class="c" x="778" y="532.500">V3V Chaud</text><text class="c" x="865.500" y="532.500">V3V Froid</text><text class="c" x="1152" y="532.500">V3V Froid</text><text class="c" x="1241" y="532.500">V3V Chaud</text><text class="c" x="1331.500" y="532.500">Humidificateur</text><text class="c" x="1421.500" y="532.500">Soufflage</text>
            <text class="c" x="693.500" y="631">Défaut Filtre</text><text class="c" x="693.500" y="645">Reprise</text>
            <text class="c" x="952" y="631">Défaut Filtre</text><text class="c" x="952" y="645">Souflage</text>
            <text class="c" x="1512" y="631">Défaut Filtre</text><text class="c" x="1512" y="645">Souflage</text>
          </g>
          <g class="vb">
            <rect x="1061.500" y="309.500" width="59" height="19"/><rect x="1061.500" y="329.500" width="59" height="19"/>
            <rect x="1241.500" y="309.500" width="59" height="19"/><rect x="1241.500" y="329.500" width="59" height="19"/>
            <rect x="748.500" y="539.500" width="59" height="19"/><rect x="835.500" y="539.500" width="59" height="19"/><rect x="1121.500" y="539.500" width="59" height="19"/><rect x="1211.500" y="539.500" width="59" height="19"/><rect x="1301.500" y="539.500" width="59" height="19"/><rect x="1391.500" y="539.500" width="59" height="19"/>
          </g>
          <g class="vg">
            <rect x="990.500" y="499.500" width="59" height="19"/><rect x="1162.500" y="489.500" width="59" height="19"/><rect x="1542.500" y="499.500" width="59" height="19"/>
          </g>
          <g class="vt">
            <text x="1091" y="322.500">19,1 °C</text><text x="1091" y="342.500">19,0 °C</text><text x="1271" y="322.500">49,2 %RH</text><text x="1271" y="342.500">51,0 %RH</text>
            <text x="1020" y="512.500">15,0 °C</text><text x="1192" y="502.500">Normal</text><text x="1572" y="512.500">18,0 °C</text>
            <text x="777" y="552.500">0,0 %</text><text x="865" y="552.500">42,0 %</text><text x="1151" y="552.500">39,8 %</text><text x="1240" y="552.500">0,0 %</text><text x="1331" y="552.500">98,4 %</text><text x="1421" y="552.500">91,1 %</text>
          </g>
        </g>

        <!-- CTA 02 -->
        <g>
          <path class="bluef" d="M1126 1000H1171V1042H1126Z"/>
          <use href="#coilw" x="777.500" y="1020"/><use href="#coilw" x="862.500" y="1020"/><use href="#coilw" x="1148.500" y="1020"/><use href="#coilw" x="1240.500" y="1020"/><use href="#coilw" x="1423.500" y="1020"/>
          <use href="#sp" x="777.500" y="1020"/><use href="#sm" x="862.500" y="1020"/><use href="#sm" x="1148.500" y="1020"/><use href="#sp" x="1240.500" y="1020"/>
          <path class="fan" d="M1414 1002L1443 1020L1414 1037Z"/>
          <text class="ctat" x="493" y="746">CTA CLUSTER 02</text>
          <g class="lb">
            <text class="c w" x="1091.500" y="727.500">T° Reprise</text><text class="c w" x="1271" y="727.500">HR% Reprise</text>
            <text class="r" x="1057" y="747.500">Mesure</text><text class="r w" x="1057" y="767.500">Consigne (lecture)</text>
            <text x="1307" y="747.500">Mesure</text><text class="w" x="1307" y="767.500">Consigne (lecture)</text>
            <text class="r w" x="1057" y="917.500">T° Pré-Soufflage</text><text class="w" x="1537" y="917.500">T° Soufflage</text>
            <text class="c" x="1192" y="907.500">Antigel</text>
            <text class="c" x="778" y="957.500">V3V Chaud</text><text class="c" x="865.500" y="957.500">V3V Froid</text><text class="c" x="1152" y="957.500">V3V Froid</text><text class="c" x="1241" y="957.500">V3V Chaud</text><text class="c" x="1331.500" y="957.500">Humidificateur</text><text class="c" x="1421.500" y="957.500">Soufflage</text>
          </g>
          <g class="vb">
            <rect x="1061.500" y="734.500" width="59" height="19"/><rect x="1061.500" y="754.500" width="59" height="19"/>
            <rect x="1241.500" y="734.500" width="59" height="19"/><rect x="1241.500" y="754.500" width="59" height="19"/>
            <rect x="748.500" y="964.500" width="59" height="19"/><rect x="835.500" y="964.500" width="59" height="19"/><rect x="1121.500" y="964.500" width="59" height="19"/><rect x="1211.500" y="964.500" width="59" height="19"/><rect x="1301.500" y="964.500" width="59" height="19"/><rect x="1391.500" y="964.500" width="59" height="19"/>
          </g>
          <g class="vg">
            <rect x="990.500" y="924.500" width="59" height="19"/><rect x="1162.500" y="914.500" width="59" height="19"/><rect x="1542.500" y="924.500" width="59" height="19"/>
          </g>
          <g class="vt">
            <text x="1091" y="747.500">19,6 °C</text><text x="1091" y="767.500">19,0 °C</text><text x="1271" y="747.500">51,0 %RH</text><text x="1271" y="767.500">53,0 %RH</text>
            <text x="1020" y="937.500">17,0 °C</text><text x="1192" y="927.500">Normal</text><text x="1572" y="937.500">19,0 °C</text>
            <text x="777" y="977.500">0,0 %</text><text x="865" y="977.500">38,0 %</text><text x="1151" y="977.500">100,0 %</text><text x="1240" y="977.500">0,1 %</text><text x="1331" y="977.500">0,0 %</text><text x="1421" y="977.500">75,0 %</text>
          </g>
        </g>
      </svg>
    </div>
    <div class="vs wide"><i class="up"></i><i class="thumb main-t"></i><i class="tr grow"></i><i class="dn"></i></div>
    <div class="hs"><i class="lf"></i><i class="tr hs-a"></i><i class="thumb hs-t"></i><i class="tr grow"></i><i class="rt"></i></div>
    <div class="corner"></div>
  </section>

  <section class="col right">
    <div class="pane bound-pane">
      <div class="phead"><i class="tri"></i><svg class="ic"><use href="#i-bound"/></svg><span>Bound Ords</span><i class="rest"></i></div>
      <div class="ptool t24 end"><svg class="ic"><use href="#i-dots"/></svg><svg class="ic"><use href="#i-edf"/></svg></div>
      <div class="blist">
        <div>file:^px_ElorPrintec/CTA.px</div>
        <div>file:^px_ElorPrintec/fond.px</div>
        <div>station:|slot:/Accueil$20ElorPrintec/Centrales$20de$20traitement$20d$27air$20Cluster$201$262</div>
        <div>station:|slot:/Accueil$20ElorPrintec/Climatisation</div>
      </div>
    </div>
    <div class="pane wtree-pane">
      <div class="phead"><i class="tri"></i><svg class="ic"><use href="#i-tree"/></svg><span>Widget Tree</span><i class="rest"></i></div>
      <div class="ptool t24 end"><svg class="ic"><use href="#i-lay1"/></svg><svg class="ic"><use href="#i-up"/></svg><svg class="ic"><use href="#i-dn"/></svg><svg class="ic"><use href="#i-lay2"/></svg></div>
      <div class="treewrap">
        <div class="tree wtree">
          <div class="row w0"><b class="minus"></b><svg class="ic"><use href="#i-scr"/></svg><span>ScrollPane (Root)</span></div>
          <div class="row w1"><b class="minus"></b><svg class="ic"><use href="#i-can"/></svg><span>CanvasPane (Content)</span></div>
          <div class="row w2"><svg class="ic"><use href="#i-px"/></svg><span>PxInclude [file:^px_ElorPrintec/CTA.px]</span></div>
          <div class="row w2"><svg class="ic"><use href="#i-px"/></svg><span class="sel">PxInclude [file:^px_ElorPrintec/CTA.px]</span></div>
          <div class="row w2"><svg class="ic"><use href="#i-lab"/></svg><span>Label [null]</span></div>
          <div class="row w2"><svg class="ic"><use href="#i-lab"/></svg><span>Label [null]</span></div>
          <div class="row w2"><svg class="ic"><use href="#i-lab"/></svg><span>Label [null]</span></div>
          <div class="row w2"><svg class="ic"><use href="#i-px"/></svg></div>
        </div>
        <div class="vs"><i class="up"></i><i class="thumb wt-t"></i><i class="tr grow"></i><i class="dn"></i></div>
      </div>
    </div>
    <div class="pane pxprop-pane">
      <div class="phead"><i class="tri"></i><svg class="ic"><use href="#i-props"/></svg><span>Px Properties</span><i class="rest"></i></div>
      <div class="ptool t24 end"><svg class="ic"><use href="#i-add"/></svg><svg class="ic"><use href="#i-stopp"/></svg></div>
      <div class="thead"><i class="tcell0"></i><span>Value</span><svg class="ic tbopt"><use href="#i-tabo"/></svg></div>
      <div class="tbody"></div>
    </div>
    <div class="pane pxlay-pane">
      <div class="phead"><i class="tri"></i><svg class="ic"><use href="#i-props"/></svg><span>Px Layers</span><i class="rest"></i></div>
      <div class="ptool t24 end"><svg class="ic"><use href="#i-add"/></svg><svg class="ic"><use href="#i-stopp"/></svg></div>
      <div class="thead"><i class="tcell0"></i><span>Status</span><svg class="ic tbopt"><use href="#i-tabo"/></svg></div>
      <div class="tbody"></div>
    </div>
    <div class="pane prop-pane">
      <div class="phead"><i class="tri"></i><svg class="ic"><use href="#i-props"/></svg><span>Properties</span><i class="rest"></i></div>
      <div class="ptool t24 proptool"><span class="pname">PxInclude</span><i class="vsep"></i><svg class="ic"><use href="#i-addc"/></svg><span class="azb"><svg class="ic"><use href="#i-az"/></svg></span><svg class="ic"><use href="#i-sort"/></svg></div>
      <div class="grp"><svg class="ic colp"><use href="#i-col"/></svg>Px Include</div>
      <div class="props">
        <div class="pr"><span>enabled</span><span>true</span><i class="ddb"></i></div>
        <div class="pr"><span>layer</span><span></span><i class="ddb"></i></div>
        <div class="pr"><span>layout</span><span>195.0,185.0,1470.0,420.0</span><i class="elb">...</i></div>
        <div class="pr"><span>ord</span><span>file:^px_ElorPrintec/CTA.px</span><i class="elb">...</i></div>
        <div class="pr"><span>variables</span><span class="clip">var=station:|slot:/Drivers/Bacnet/DDC420_$239_Elorprintec</span><i class="elb">...</i></div>
        <div class="pr last"><span>visible</span><span>true</span><i class="ddb"></i></div>
      </div>
    </div>
  </section>
</main>

<footer class="status">
  <span class="stext">PxInclude [file:^px_ElorPrintec/CTA.px]</span>
  <span class="mono m-a">x1.0</span><span class="mono m-b">705, 589</span><svg class="ic"><use href="#i-chk"/></svg>
</footer>
</body>
</html>
```
FILE: styles.css
```css
* { box-sizing: border-box; }
html, body { margin: 0; padding: 0; }
body {
  width: 1920px; height: 1050px; overflow: hidden;
  display: flex; flex-direction: column;
  background: #ebe9d8; color: #111;
  font: 11px/1 "Noto Sans", "Liberation Sans", sans-serif;
}
i { font-style: normal; display: block; }
.defs { position: absolute; }
.ic { width: 16px; height: 16px; flex: none; display: block; }

/* window chrome */
.titlebar {
  height: 21px; flex: none; display: flex; justify-content: space-between;
  background: linear-gradient(90deg, #3b69b0 0, #3a69b2 30%, #4f7fc4 50%, #3a69b0 60%, #3968b0 72%, #4f7dc0 84%, #3b6ab2 100%);
  border-bottom: 1px solid #dfe6ee;
}
.glow {
  display: flex; align-items: center; height: 20px; width: 112px; padding-left: 2px; gap: 5px;
  font-size: 12px; color: #111;
  background: linear-gradient(90deg, rgba(205,220,240,.75) 0, rgba(190,210,236,.7) 70%, rgba(190,210,236,0) 100%);
}
.wa { width: 14px; height: 14px; }
.winctl { display: flex; height: 18px; margin-right: 3px; border: 1px solid #33456a; border-top: 0; border-radius: 0 0 4px 4px; overflow: hidden; }
.wc { display: flex; align-items: center; justify-content: center; height: 17px; color: #fff; font: bold 13px "Liberation Sans", sans-serif; }
.wc-min, .wc-max { width: 26px; background: linear-gradient(#a6bdd8, #5b7fae 50%, #44689a); border-right: 1px solid #c5d3e6; }
.wc-min i { width: 11px; height: 4px; margin-top: 6px; background: #fff; border: 1px solid #334; }
.wc-max i { width: 8px; height: 11px; background: none; border: 2px solid #fff; outline: 1px solid #334; }
.wc-close { width: 48px; background: linear-gradient(#d8a08e, #b83a26 50%, #b4432e); text-shadow: 0 0 1px #400; }

.menubar {
  height: 22px; flex: none; display: flex; align-items: center; padding-left: 8px; gap: 12px;
  background: linear-gradient(#f6f5ea, #f0eee0); border-bottom: 1px solid #a9a89c;
  font-size: 10.5px; letter-spacing: -.25px;
}
.toolbar { height: 27px; flex: none; display: flex; align-items: center; padding-bottom: 3px; }
.b { width: 24px; height: 24px; display: flex; align-items: center; justify-content: center; flex: none; }
.b.on { background: #adaba0; width: 18px; height: 20px; margin: 0 3px; }
.d { width: 0; height: 0; margin: 0 4px 0 -2px; border: 4px solid transparent; border-top: 4px solid #222; border-bottom: 0; flex: none; }
.d.pale { border-top-color: #a8a79a; }
.d.lite { border-top-color: #eee; margin: 0 0 0 9px; }
.s1 { width: 1px; flex: none; }
.s2 { width: 2px; flex: none; }
.sep { width: 1px; height: 22px; margin: 0 4px 0 5px; background: #9a9990; flex: none; }
.sep.n { margin: 0 0 0 5px; }

.tabbar { height: 26px; flex: none; display: flex; gap: 1px; }
.tabs, .editvue {
  display: flex; align-items: center; height: 26px; white-space: nowrap;
  background: linear-gradient(#b3b3ab, #96968e); border: 1px solid #444; border-left: 0; color: #f2f2ec; font-size: 11px; letter-spacing: -.22px;
}
.tabs { flex: 1; padding-left: 6px; }
.tab { display: flex; align-items: center; gap: 4px; flex: none; }
.t1 { width: 212px; }
.t2 { width: 177px; gap: 1px; letter-spacing: -.3px; }
.t3 { width: 70px; gap: 5px; }
.t4 { width: 127px; gap: 5px; }
.t5 { letter-spacing: -.3px; }
.editvue { width: 82px; padding-left: 6px; border-left: 1px solid #444; gap: 1px; }
.fox { width: 18px; }

/* main layout */
.main { flex: 1; min-height: 0; display: flex; padding-top: 7px; align-items: stretch; }
.col { display: flex; flex-direction: column; border: 1px solid #333; background: #fff; }
.left { width: 401px; margin-left: 1px; }
.right { width: 331px; margin-left: 6px; margin-bottom: 1px; }
.pane { display: flex; flex-direction: column; min-height: 0; }
.phead {
  height: 20px; flex: none; display: flex; align-items: center; gap: 3px;
  background: linear-gradient(90deg, #bad5fb 0, #bad5fb 70%, #a9c8f3 100%);
  border-bottom: 1px solid #111; padding-right: 3px; font-size: 11px; letter-spacing: -.2px;
}
.pal-pane .phead { height: 21px; }
.phead .rest { margin-left: auto; width: 12px; height: 11px; border: 1px solid #333; border-top-width: 3px; background: #c9dcf7; }
.tri { width: 0; height: 0; margin: 0 5px 0 5px; border: 3.500px solid transparent; border-top: 4px solid #111; border-bottom: 0; }
.ptool { display: flex; align-items: center; flex: none; background: #ebe9d8; border-bottom: 1px solid #333; }
.t32 { height: 32px; }
.t24 { height: 24px; }
.end { justify-content: flex-end; gap: 8px; padding-right: 4px; }
.m1 { margin-left: 8px; }
.m2 { margin-left: 8px; }
.m3 { margin-left: 9px; }
.combo {
  width: 312px; height: 20px; margin-left: 9px; display: flex; align-items: center; gap: 2px;
  background: #fff; border: 1px solid #222; outline: 1px solid #c8c6b5; padding-left: 2px; font-size: 11px; letter-spacing: -.3px;
}
.combo.c2 { margin-left: 7px; padding-left: 3px; }
.cbtn {
  margin-left: auto; width: 17px; height: 18px; border-left: 1px solid #222; position: relative; background: #fff;
}
.cbtn::after { content: ""; position: absolute; left: 4px; top: 7px; border: 4px solid transparent; border-top: 5px solid #111; border-bottom: 0; }
.tbtn { width: 22px; height: 22px; margin-left: 4px; display: flex; align-items: center; justify-content: center; border: 1px solid #fff; outline: 1px solid #b5b3a3; }
.m3b { margin-left: 7px; }
.fbtn { width: 18px; height: 18px; margin-left: 9px; background: #b2b0a5; display: flex; align-items: flex-end; justify-content: flex-end; }

/* trees */
.nav-pane { height: 553px; flex: none; border-bottom: 1px solid #222; }
.pal-pane { flex: 1; }
.nav-pane .treewrap { flex: 1; }
.treewrap { display: flex; min-height: 0; overflow: hidden; }
.pal-pane .treewrap { height: 202px; flex: none; }
.tree { flex: 1; min-width: 0; overflow: hidden; background: #fff; padding-top: 4px; }
.row {
  height: 19px; display: flex; align-items: center; white-space: nowrap; gap: 0;
  background-repeat: repeat-y; background-size: 1px 2px;
}
.row span { margin-left: 3px; padding: 2px 1px; letter-spacing: -.15px; }
.navtree .row span { letter-spacing: -.24px; }
.paltree .row span { letter-spacing: -.35px; }
.row .sel { background: #316ac5; color: #fff; padding: 3px 2px; margin-left: 2px; }
.plus, .minus { width: 9px; height: 9px; margin-right: 4px; border: 1px solid #222; flex: none; position: relative; background: #fff; }
.plus { background: linear-gradient(#222,#222) center/5px 1px no-repeat, linear-gradient(#222,#222) center/1px 5px no-repeat, #fff; }
.minus { background: linear-gradient(#222,#222) center/5px 1px no-repeat, #fff; }
.plus::after, .minus::after { content: ""; position: absolute; left: 8px; top: 3px; width: 4px; border-top: 1px dotted #444; }
.l0 { padding-left: 3px; }
.l1 { padding-left: 36px; }
.l2 { padding-left: 52px; }
.l3 { padding-left: 85px; }
.lp { padding-left: 19px; }
.d0 { background-image: linear-gradient(#222 50%, transparent 50%); background-position: 7px 0; }
.d1 { background-image: linear-gradient(#222 50%, transparent 50%), linear-gradient(#222 50%, transparent 50%); background-position: 7px 0, 40px 0; }
.d2 { background-image: linear-gradient(#222 50%, transparent 50%), linear-gradient(#222 50%, transparent 50%), linear-gradient(#222 50%, transparent 50%); background-position: 7px 0, 40px 0, 56px 0; }
.d3 { background-image: linear-gradient(#222 50%, transparent 50%), linear-gradient(#222 50%, transparent 50%), linear-gradient(#222 50%, transparent 50%), linear-gradient(#222 50%, transparent 50%); background-position: 7px 0, 40px 0, 56px 0, 89px 0; }
.dp { background-image: linear-gradient(#222 50%, transparent 50%), linear-gradient(#222 50%, transparent 50%); background-position: 7px 0, 23px 0; }
.w0 { padding-left: 3px; }
.w1 { padding-left: 19px; }
.w1 .minus, .w0 .minus { margin-right: 3px; }
.w2 { padding-left: 49px; background-image: linear-gradient(#222 50%, transparent 50%); background-position: 39px 0; }
.w2 span { margin-left: 2px; }

/* scrollbars */
.vs { width: 16px; flex: none; display: flex; flex-direction: column; background: #a5a196; border-left: 1px solid #333; }
.vs.wide { width: 16px; border-left: 1px solid #555; }
.tr { flex: none; }
.tr.grow { flex: 1; }
.up, .dn, .lf, .rt { flex: none; background-color: #bed3f8; position: relative; border: 1px solid #8ea8d8; }
.up, .dn { height: 15px; }
.lf, .rt { width: 15px; }
.up::after, .dn::after, .lf::after, .rt::after { content: ""; position: absolute; border: 4px solid transparent; }
.up::after { left: 3px; top: 3px; border-bottom: 5px solid #51647f; border-top: 0; }
.dn::after { left: 3px; top: 4px; border-top: 5px solid #51647f; border-bottom: 0; }
.lf::after { left: 3px; top: 3px; border-right: 5px solid #51647f; border-left: 0; }
.rt::after { left: 5px; top: 3px; border-left: 5px solid #51647f; border-right: 0; }
.thumb { flex: none; background: #bed3f8; border: 1px solid #9ab4e2; }
.vs .thumb { background-image: repeating-linear-gradient(#f2f6fd 0 1px, transparent 1px 3px); background-size: 10px 10px; background-repeat: no-repeat; background-position: center; }
.hs .thumb { background-image: repeating-linear-gradient(90deg, #f2f6fd 0 1px, transparent 1px 3px); background-size: 10px 10px; background-repeat: no-repeat; background-position: center; }
.nav-a { height: 401px; }
.nav-t { height: 51px; }
.pal-a { height: 55px; }
.pal-t { height: 41px; }
.wt-t { height: 79px; }
.main-t { height: 757px; }
.hs-a { width: 164px; }
.hs-t { width: 770px; }

.splitter { height: 7px; flex: none; background: #ebe9d8; border-top: 1px solid #444; border-bottom: 1px solid #888; }
.preview { flex: 1; display: flex; align-items: center; justify-content: center; padding: 0 0 3px 10px; background: #fff; letter-spacing: -.1px; }

/* center */
.center {
  width: 1172px; margin-left: 8px; display: grid;
  grid-template-columns: 1152px 16px; grid-template-rows: 907px 16px;
  border: 2px solid #1a1a18; background: #ebe9d8; align-self: flex-start;
}
.canvas { overflow: hidden; width: 1152px; height: 907px; }
.diagram { display: block; font-family: "Noto Sans", sans-serif; }
.hs { display: flex; background: #a5a196; border-top: 1px solid #333; }
.corner { background: #ebe9d8; }

.bg-low { fill: #e6e6e6; }
.hatchl { fill: url(#hl); }
.top1 { fill: #b17e82; }
.top2 { fill: #945f65; }
.top3 { fill: #a66c72; }
.pill { fill: #2d2c28; stroke: #4b4a46; }
.light { fill: #e6e6e6; }
.curve { fill: #8a8a7d; }
.nb1 { fill: #ad7478; }
.nb2 { fill: #7c7c76; }
.hatchu { fill: url(#hu); }
.ttl { font: 700 30px "Open Sans", sans-serif; letter-spacing: -.18px; fill: #fff; text-anchor: middle; }
.nbt { font: 700 18.5px "Open Sans", sans-serif; fill: #f4f0f0; text-anchor: middle; }
.gline { stroke: #2fe82f; fill: none; }
.bline { stroke: #111; fill: none; }
.grn { fill: #00e000; stroke: #222; }
.duct, .duct path, .duct rect { fill: #0e0e0e; }
.ln { fill: none; stroke: #1a1a1a; }
.zz { fill: none; stroke: #3a3a3a; stroke-width: .8; }
.bx rect { fill: #e8e8e8; fill-opacity: .35; stroke: #1a1a1a; }
.lbox rect { fill: #e8e8e8; fill-opacity: .35; stroke: #222; }
.hum { fill: url(#gBlue); }
.vlv path { fill: #e0e0e0; stroke: #333; }
.thin text { font: 300 19px Roboto, sans-serif; fill: #1c1c1c; text-anchor: middle; }
.thin .big { font-size: 24px; }
.thin .vap { letter-spacing: 2px; font-size: 18px; }
.wc { fill: #fff; fill-opacity: .85; stroke: #666; }
.fan { fill: #00e000; stroke: #111; }
.bluef { fill: #4040ff; fill-opacity: .9; }
.bluel { fill: #8a8af5; }
.ctat { font: 700 21.5px "Noto Sans", sans-serif; fill: #0c0c0c; }
.lb text { font: 700 11px "Noto Sans", sans-serif; fill: #0a0a0a; }
.lb .w { letter-spacing: .32px; }
.lb .c { text-anchor: middle; }
.lb .r { text-anchor: end; }
.vb rect { fill: #e8e8e8; fill-opacity: .7; stroke: #1a1a1a; }
.vg rect { fill: #00e000; stroke: #111; }
.vt text { font: 700 12px "Noto Sans", sans-serif; fill: #0a0a0a; text-anchor: middle; }

/* right column panes */
.bound-pane { height: 184px; flex: none; }
.blist { flex: 1; background: #fff; padding: 0 2px; border-bottom: 1px solid #222; overflow: hidden; white-space: nowrap; margin-top: -2px; }
.blist div { height: 18px; display: flex; align-items: center; letter-spacing: -.3px; }
.wtree-pane { height: 185px; flex: none; }
.wtree-pane .treewrap { flex: 1; border-bottom: 1px solid #222; }
.pxprop-pane { height: 185px; flex: none; border-bottom: 1px solid #222; }
.pxlay-pane { height: 185px; flex: none; border-bottom: 1px solid #222; }
.prop-pane { flex: 1; }
.thead { height: 17px; flex: none; display: flex; align-items: center; background: #ebe9d8; border-bottom: 1px solid #333; }
.tcell0 { width: 13px; height: 16px; border-right: 1px solid #777; }
.thead span { margin-left: 3px; }
.tbopt { margin-left: auto; border-left: 1px solid #333; width: 16px; }
.tbody { flex: 1; background: #fff; }
.proptool { padding-right: 6px; gap: 6px; }
.pname { padding-left: 4px; }
.vsep { margin-left: auto; margin-right: 4px; width: 1px; height: 22px; background: #aaa89a; }
.azb { width: 18px; height: 18px; background: #b2b0a5; display: flex; align-items: center; justify-content: center; }
.grp { height: 18px; flex: none; display: flex; align-items: center; gap: 1px; padding: 1px 0 0 2px; background: #ebe9d8; border-bottom: 1px solid #111; }
.colp { width: 14px; height: 14px; margin-right: 2px; }
.props { background: #fff; border-bottom: 1px solid #111; }
.pr { display: grid; grid-template-columns: 74px 1fr 18px; height: 17px; align-items: center; border-bottom: 1px solid #b9b7a8; line-height: 1.35; }
.pr.last { border-bottom: 0; }
.pr span:first-child { padding-left: 2px; border-right: 1px solid #b9b7a8; height: 17px; display: flex; align-items: center; }
.pr span:nth-child(2) { padding-left: 3px; white-space: nowrap; overflow: hidden; }
.ddb { width: 16px; height: 13px; border: 1px solid #222; background: #fff; position: relative; }
.ddb::after { content: ""; position: absolute; left: 3px; top: 3px; border: 4px solid transparent; border-top: 5px solid #111; border-bottom: 0; }
.elb { width: 16px; height: 13px; border: 1px solid #445; background: #c5d8f8; font: bold 11px/6px "Liberation Sans", sans-serif; text-align: center; letter-spacing: 0; }

.status { height: 21px; flex: none; display: flex; align-items: center; padding-left: 2px; gap: 3px; }
.stext { margin-right: auto; font-size: 11px; }
.mono { font: 12px "Liberation Mono", monospace; border: 1px solid #555; height: 16px; display: flex; align-items: center; padding-left: 1px; background: #ebe9d8; }
.m-a { width: 33px; }
.m-b { width: 67px; }
```
